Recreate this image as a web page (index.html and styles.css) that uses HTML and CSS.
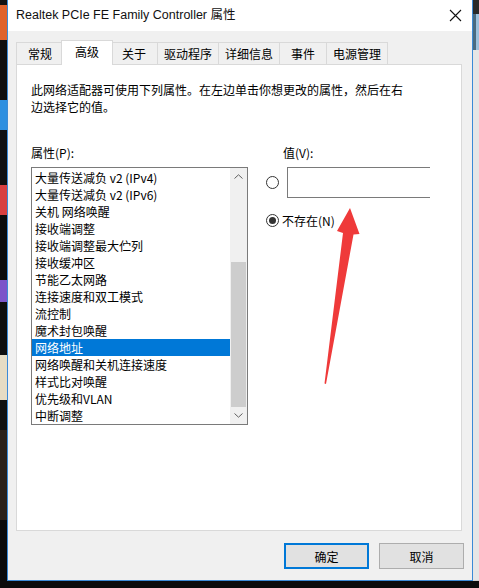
FILE: index.html
```html
<!DOCTYPE html>
<html lang="zh-CN">
<head>
<meta charset="utf-8">
<title>Realtek PCIe FE Family Controller 属性</title>
<link rel="stylesheet" href="styles.css">
</head>
<body>
<div class="screen">
  <div class="desk-left">
    <span class="d1"></span><span class="d2"></span><span class="d3"></span><span class="d4"></span>
    <span class="d5"></span><span class="d6"></span><span class="d7"></span><span class="d8"></span>
    <span class="d9"></span><span class="d10"></span><span class="d11"></span><span class="d12"></span>
    <span class="d13"></span>
  </div>
  <div class="window">
    <div class="titlebar">
      <span class="title">Realtek PCIe FE Family Controller 属性</span>
      <svg class="close" width="13" height="13" viewBox="0 0 13 13"><path d="M1 1L12 12M12 1L1 12" stroke="#111" stroke-width="1.1" fill="none"/></svg>
    </div>
    <div class="body">
      <div class="tabs">
        <div class="tab">常规</div>
        <div class="tab active">高级</div>
        <div class="tab">关于</div>
        <div class="tab">驱动程序</div>
        <div class="tab">详细信息</div>
        <div class="tab">事件</div>
        <div class="tab">电源管理</div>
      </div>
      <div class="panel">
        <p class="desc">此网络适配器可使用下列属性。在左边单击你想更改的属性，然后在右<br>边选择它的值。</p>
        <div class="fields">
          <div class="col-left">
            <div class="label">属性(P):</div>
            <div class="listbox">
              <ul class="items">
                <li>大量传送减负 v2 (IPv4)</li>
                <li>大量传送减负 v2 (IPv6)</li>
                <li>关机 网络唤醒</li>
                <li>接收端调整</li>
                <li>接收端调整最大伫列</li>
                <li>接收缓冲区</li>
                <li>节能乙太网路</li>
                <li>连接速度和双工模式</li>
                <li>流控制</li>
                <li>魔术封包唤醒</li>
                <li class="selected">网络地址</li>
                <li>网络唤醒和关机连接速度</li>
                <li>样式比对唤醒</li>
                <li>优先级和VLAN</li>
                <li>中断调整</li>
              </ul>
              <div class="scrollbar">
                <div class="sb-btn"><svg width="9" height="5" viewBox="0 0 9 5"><path d="M0.5 4.5L4.5 0.8L8.5 4.5" stroke="#606060" fill="none"/></svg></div>
                <div class="sb-track"></div>
                <div class="sb-thumb"></div>
                <div class="sb-btn"><svg width="9" height="5" viewBox="0 0 9 5"><path d="M0.5 0.5L4.5 4.2L8.5 0.5" stroke="#606060" fill="none"/></svg></div>
              </div>
            </div>
          </div>
          <div class="col-right">
            <div class="label value-label">值(V):</div>
            <div class="radio-row first">
              <span class="radio"></span>
              <span class="textbox"></span>
            </div>
            <div class="radio-row">
              <span class="radio checked"></span>
              <span class="radio-text">不存在(N)</span>
            </div>
          </div>
        </div>
      </div>
      <div class="buttons">
        <button class="btn default">确定</button>
        <button class="btn">取消</button>
      </div>
    </div>
  </div>
  <div class="desk-right">
    <span class="r1"></span>
    <span class="r2"></span>
    <span class="r3"></span>
    <span class="r4"></span>
  </div>
  <svg class="arrow" width="479" height="588" viewBox="0 0 479 588">
    <polygon points="350,208 359.5,234 353.5,234.5 326,384 324.5,383.5 343,233 337,231" fill="#ef3a3a"/>
  </svg>
</div>
</body>
</html>
```
FILE: styles.css
```css
* { box-sizing: border-box; margin: 0; padding: 0; }
html, body { width: 479px; height: 588px; overflow: hidden; }
body {
  background: #0b0b0b;
  font-family: "Noto Sans CJK SC", "Noto Sans", sans-serif;
  font-size: 12px;
  color: #000;
}
.screen { position: relative; display: flex; width: 479px; height: 588px; }

/* desktop strips */
.desk-left { width: 7px; display: flex; flex-direction: column; }
.desk-left span { display: block; }
.d1 { height: 5px; background: #121212; }
.d2 { height: 35px; background: #e0622b; }
.d3 { height: 60px; background: #0f0f0f; }
.d4 { height: 30px; background: #2d8fe0; }
.d5 { height: 55px; background: #101010; }
.d6 { height: 30px; background: #d84040; }
.d7 { height: 65px; background: #0c0c0c; }
.d8 { height: 22px; background: #7b55c9; }
.d9 { height: 53px; background: #0e0e0e; }
.d10 { height: 45px; background: #e6dcc4; }
.d11 { height: 30px; background: #111; }
.d12 { height: 90px; background: #2b2119; }
.d13 { flex: 1; background: #0b0b0b; }

.desk-right { width: 6px; display: flex; flex-direction: column; overflow: hidden; }
.desk-right span { display: block; }
.r1 { height: 14px; background: #2a2a2a; }
.r2 { height: 36px; background: #9cc0dc; border-left: 3px solid #4a6a80; }
.r3 { height: 531px; background: #e6e6e6; border-bottom: 1px solid #d0d0d0; }
.r4 { flex: 1; background: #0b0b0b; }

/* window */
.window {
  width: 466px;
  height: 581px;
  display: flex;
  flex-direction: column;
  border: 1px solid #3b8ad6;
  border-top: 0;
  background: #f0f0f0;
}
.titlebar {
  height: 31px;
  flex: none;
  background: #fff;
  display: flex;
  align-items: center;
  justify-content: space-between;
  padding: 0 10px 0 8px;
}
.title {
  font-family: "Liberation Sans", "Noto Sans CJK SC", sans-serif;
  font-size: 12.5px;
  line-height: 17px;
  color: #111;
}
.close { display: block; }

.body { flex: 1; display: flex; flex-direction: column; }

.tabs {
  height: 33px;
  display: flex;
  align-items: flex-end;
  padding-left: 8px;
}
.tab {
  position: relative;
  height: 22px;
  min-width: 48px;
  padding: 0 6px;
  line-height: 21px;
  border: 1px solid #d9d9d9;
  border-bottom: 0;
  margin-right: -1px;
  background: #f0f0f0;
  text-align: center;
}
.tab.active {
  height: 25px;
  min-width: 52px;
  margin: 0 -3px -1px -2px;
  padding: 0 8px;
  line-height: 22px;
  background: #fff;
  z-index: 1;
}

.panel {
  width: 446px;
  height: 467px;
  margin-left: 8px;
  background: #fff;
  border: 1px solid #d9d9d9;
  padding: 16px 0 0 14px;
}
.desc { line-height: 17px; }
.fields {
  display: grid;
  grid-template-columns: 217px 1fr;
  column-gap: 18px;
  margin-top: 29px;
}
.label { line-height: 17px; }
.value-label { padding-left: 17px; }

.listbox {
  margin-top: 6px;
  width: 217px;
  height: 258px;
  border: 1px solid #7a7a7a;
  display: flex;
}
.items { list-style: none; flex: 1; padding-top: 1px; }
.items li { height: 17px; line-height: 17px; padding-left: 3px; white-space: nowrap; }
.items li.selected { background: #0078d7; color: #fff; }

.scrollbar { width: 17px; display: flex; flex-direction: column; background: #f0f0f0; }
.sb-btn { height: 17px; display: flex; align-items: center; justify-content: center; }
.sb-track { height: 77px; }
.sb-thumb { height: 145px; background: #cdcdcd; margin: 0 1px; }
.sb-btn svg { display: block; }

.radio-row { display: flex; align-items: center; gap: 3px; }
.radio-row.first { margin-top: 6px; gap: 8px; }
.radio-row + .radio-row { margin-top: 14px; }
.radio-text { line-height: 17px; }
.radio {
  width: 13px;
  height: 13px;
  flex: none;
  border: 1px solid #333;
  border-radius: 50%;
  background: #fff;
  display: flex;
  align-items: center;
  justify-content: center;
}
.radio.checked::after {
  content: "";
  width: 7px;
  height: 7px;
  border-radius: 50%;
  background: #333;
}
.textbox {
  width: 143px;
  height: 31px;
  border: 1px solid #7a7a7a;
  border-right: 0;
  background: #fff;
}

.buttons {
  display: flex;
  justify-content: flex-end;
  gap: 10px;
  margin-top: 12px;
  padding-right: 8px;
}
.btn {
  width: 85px;
  height: 26px;
  font-family: inherit;
  font-size: 12px;
  color: #000;
  background: #e1e1e1;
  border: 1px solid #adadad;
}
.btn.default { border: 2px solid #0078d7; }

.arrow { position: absolute; left: 0; top: 0; pointer-events: none; }
```
